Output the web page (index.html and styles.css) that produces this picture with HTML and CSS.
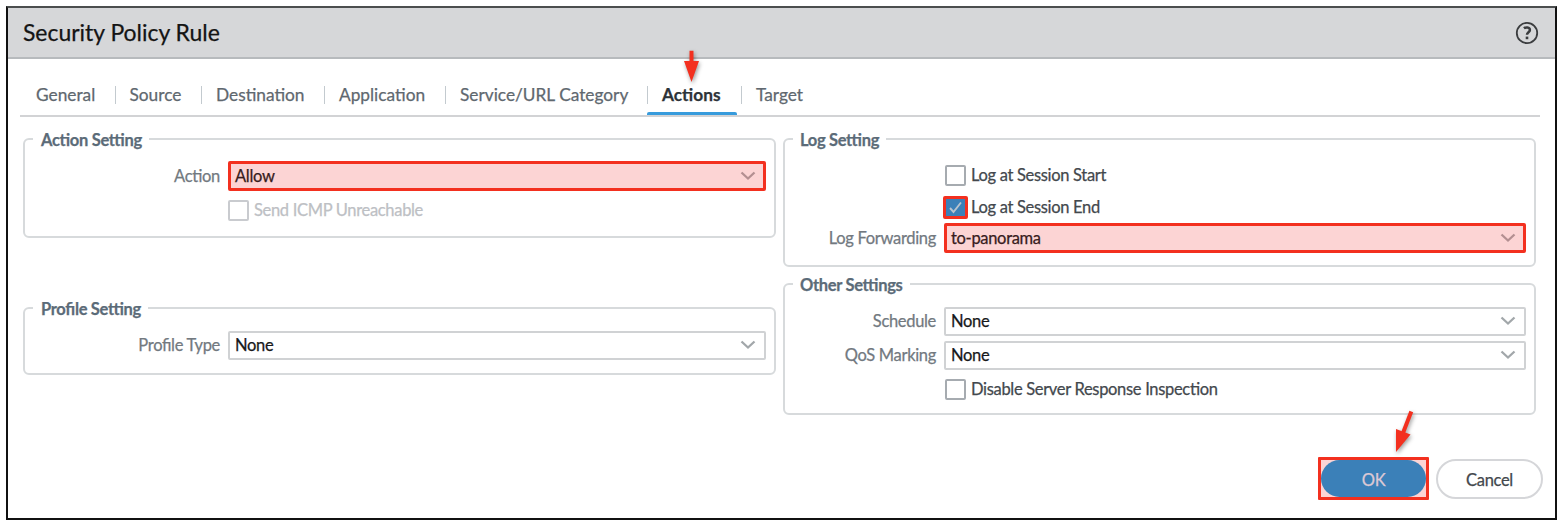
FILE: index.html
```html
<!DOCTYPE html>
<html lang="en">
<head>
<meta charset="utf-8">
<title>Security Policy Rule</title>
<link rel="stylesheet" href="styles.css">
</head>
<body>
<main class="dialog">
  <header class="dialog-head">
    <h1 class="title"><span>Security Policy Rule</span></h1>
    <svg class="help" width="24" height="24" viewBox="0 0 24 24" fill="none" stroke="#3b3d3f"><circle cx="12" cy="12" r="10.2" stroke-width="1.8"/><path d="M8.9 7.3C10.3 6.3 14.9 5.9 14.9 9c0 2.3-2.9 2.3-2.9 4.8" stroke-width="2.5"/><path d="M12 15.6v2.6" stroke-width="2.6"/></svg>
  </header>
  <nav class="tabs">
    <span class="tab general"><span>General</span></span>
    <span class="tab source"><span>Source</span></span>
    <span class="tab destination"><span>Destination</span></span>
    <span class="tab application"><span>Application</span></span>
    <span class="tab service"><span>Service/URL Category</span></span>
    <span class="tab actions"><span>Actions</span>
      <svg class="arrow arrow-tab" width="32" height="44" viewBox="0 0 32 44"><path d="M13.500 6.700h4v10.300h5.500L15.500 38 8 17h5.500z" fill="#f3301f"/></svg>
    </span>
    <span class="tab target"><span>Target</span></span>
  </nav>
  <div class="columns">
    <div class="column">
      <fieldset class="group action-group">
        <legend>Action Setting</legend>
        <div class="row"><label>Action</label><div class="select marked"><span>Allow</span><svg class="chevron" width="16" height="10" viewBox="0 0 16 10"><path d="M1.5 1.5 8 7.5l6.500-6"/></svg></div></div>
        <div class="row check disabled"><i class="box"></i><span>Send ICMP Unreachable</span></div>
      </fieldset>
      <fieldset class="group profile-group">
        <legend>Profile Setting</legend>
        <div class="row"><label>Profile Type</label><div class="select"><span>None</span><svg class="chevron" width="16" height="10" viewBox="0 0 16 10"><path d="M1.5 1.5 8 7.5l6.500-6"/></svg></div></div>
      </fieldset>
    </div>
    <div class="column right">
      <fieldset class="group log-group">
        <legend>Log Setting</legend>
        <div class="row check"><i class="box"></i><span>Log at Session Start</span></div>
        <div class="row check end"><i class="box checked"><svg width="19" height="17" viewBox="0 0 19 17"><path d="M4 9l3.500 4L15 3.500" fill="none" stroke="#b9c3ce" stroke-width="1.900"/></svg></i><span>Log at Session End</span></div>
        <div class="row"><label>Log Forwarding</label><div class="select marked"><span>to-panorama</span><svg class="chevron" width="16" height="10" viewBox="0 0 16 10"><path d="M1.5 1.5 8 7.5l6.500-6"/></svg></div></div>
      </fieldset>
      <fieldset class="group other-group">
        <legend>Other Settings</legend>
        <div class="row"><label>Schedule</label><div class="select"><span>None</span><svg class="chevron" width="16" height="10" viewBox="0 0 16 10"><path d="M1.5 1.5 8 7.5l6.500-6"/></svg></div></div>
        <div class="row"><label>QoS Marking</label><div class="select"><span>None</span><svg class="chevron" width="16" height="10" viewBox="0 0 16 10"><path d="M1.5 1.5 8 7.5l6.500-6"/></svg></div></div>
        <div class="row check"><i class="box"></i><span>Disable Server Response Inspection</span></div>
      </fieldset>
    </div>
  </div>
  <footer class="buttons">
    <div class="ok-mark"><button class="button ok">OK</button>
      <svg class="arrow arrow-ok" width="36" height="54" viewBox="0 0 36 54"><path d="M25.300 4.500 17 26" stroke="#f3301f" stroke-width="4"/><path d="M10 22l14.500 5.500L10 45z" fill="#f3301f"/></svg>
    </div>
    <button class="button cancel">Cancel</button>
  </footer>
</main>
</body>
</html>
```
FILE: styles.css
```css
* { box-sizing: border-box; }
body {
  margin: 0;
  padding: 6px 0 0 6px;
  background: #fff;
  font: 16.5px/20px Lato, "Liberation Sans", sans-serif;
  letter-spacing: -.32px;
  font-feature-settings: "liga" 1;
  color: #43484d;
  -webkit-text-stroke: .25px currentColor;
}
.dialog {
  width: 1551px;
  height: 514px;
  border: 2px solid #111;
  border-top-color: #4b4e4e;
}
.dialog-head {
  display: flex;
  align-items: center;
  justify-content: space-between;
  height: 51px;
  padding: 0 16px 0 15px;
  background: #d6d7d9;
  border-bottom: 2px solid #b7babd;
}
.title {
  margin: -2px 0 0;
  font-size: 22.95px;
  letter-spacing: 0;
  font-weight: 400;
  line-height: 28px;
  color: #141414;
}
.help { display: block; }
.tabs {
  display: flex;
  align-items: flex-end;
  height: 58px;
  margin: 0 15px 0 12px;
  border-bottom: 2px solid #d2d3d5;
  font-size: 17.3px;
  letter-spacing: 0;
  color: #5f686f;
}
.tab {
  position: relative;
  height: 41px;
  padding: 11px 0 0 15px;
  white-space: nowrap;
}
.tab::before {
  content: "";
  position: absolute;
  left: 0;
  top: 12px;
  width: 1px;
  height: 18px;
  background: #c3cacf;
}
.general { width: 94.5px; padding-left: 16px; }
.general::before { display: none; }
.source { width: 86.5px; }
.destination { width: 123px; }
.application { width: 121px; }
.service { width: 202px; }
.actions { width: 94px; font-weight: 700; color: #2d3338; }
.actions::after {
  content: "";
  position: absolute;
  left: 0;
  bottom: 0;
  width: 90px;
  height: 3px;
  border-radius: 2px 2px 0 0;
  background: #379bdc;
}
.arrow {
  position: absolute;
  filter: drop-shadow(1px 2px 2px rgba(0, 0, 0, .4));
}
.arrow-tab { left: 29px; top: -30px; }
.columns {
  display: flex;
  gap: 7px;
  margin: 12px 0 0 15px;
}
.column { width: 753px; }
.group {
  margin: 0;
  padding: 0;
  min-width: 0;
  border: 2px solid #d7dadc;
  border-radius: 6px;
}
.action-group { height: 109px; margin-bottom: 60px; }
.profile-group { height: 77px; }
.log-group { height: 138px; margin-bottom: 7px; }
.other-group { height: 141px; }
legend {
  height: 20px;
  margin-left: 8px;
  padding: 1px 7px 0 8px;
  font-weight: 700;
  color: #5b6b78;
}
.right legend { padding-left: 7px; }
.row {
  display: flex;
  align-items: center;
  height: 30px;
}
label {
  width: 195px;
  text-align: right;
  color: #72797f;
}
.right label { width: 151px; }
.select {
  display: flex;
  align-items: center;
  justify-content: space-between;
  width: 538px;
  height: 29px;
  margin-left: 8px;
  padding: 0 8px 0 5px;
  border: 2px solid #d0d2d4;
  border-radius: 2px;
  background: #fff;
  color: #17191b;
}
.right .select { width: 582px; }
.select.marked {
  height: 30px;
  padding: 0 7px 0 4px;
  border: 3px solid #f3301f;
  background: #fcd4d4;
  color: #381c1d;
}
.chevron { fill: none; stroke: #a2a7aa; stroke-width: 2.3; }
.marked .chevron { stroke: #b38f91; }
.check { padding-left: 203px; }
.right .check { padding-left: 160px; }
.box {
  display: flex;
  align-items: center;
  justify-content: center;
  width: 21px;
  height: 21px;
  margin-right: 5px;
  border: 2px solid #a6abb0;
  border-radius: 2px;
}
.disabled { color: #bdc0c4; }
.disabled .box { border-color: #c9cbcf; }
.box.checked {
  width: 25px;
  height: 23px;
  margin: 0 3px 0 -2px;
  border: 3px solid #f3301f;
  background: #3b80b8;
}
.action-group .row:nth-of-type(1) { margin-top: 12px; }
.action-group .check { margin-top: 4px; }
.profile-group .row { margin-top: 12px; }
.log-group .row:nth-of-type(1) { margin-top: 11px; }
.log-group .end { margin-top: 2px; }
.log-group .end + .row { margin-top: 1px; }
.other-group .row:nth-of-type(1) { margin-top: 12px; }
.other-group .row + .row { margin-top: 4px; }
.buttons {
  display: flex;
  align-items: center;
  justify-content: flex-end;
  gap: 7px;
  margin: 42px 12px 0 0;
}
.ok-mark {
  position: relative;
  width: 111px;
  height: 43px;
  border: 3px solid #f3301f;
  border-radius: 1px;
  background: #fcd4d4;
}
.button {
  display: block;
  margin: 0;
  padding: 2px 0 0;
  font: inherit;
  letter-spacing: inherit;
  border-radius: 20px;
}
.ok {
  width: 105px;
  height: 37px;
  border: 0;
  background: #3b80b8;
  color: #dcc9d5;
}
.cancel {
  width: 107px;
  height: 40px;
  border: 2px solid #d5d6d9;
  background: #fff;
  color: #43484d;
}
.arrow-ok { left: 65px; top: -53px; }
```
